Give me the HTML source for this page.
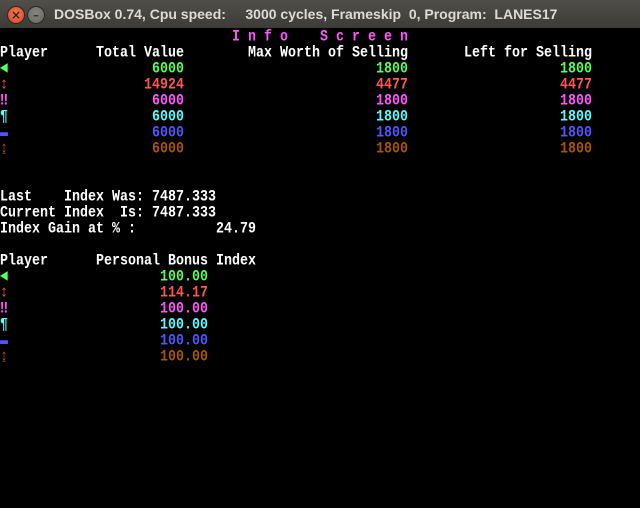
<!DOCTYPE html>
<html><head><meta charset="utf-8"><style>
html,body{margin:0;padding:0;background:#000;width:640px;height:508px;overflow:hidden;position:relative}
#tb{position:absolute;left:0;top:0;width:640px;height:28px;background:linear-gradient(#504f4a,#3c3b37);}
#tb .t{position:absolute;left:54px;top:6px;font:bold 14px "Liberation Sans","DejaVu Sans",sans-serif;color:#dfdbd2;white-space:pre}
.btn{position:absolute;top:6px;width:18px;height:18px;border-radius:50%;box-sizing:border-box;border:1px solid #2a2926}
#close{left:7px;background:radial-gradient(circle at 50% 40%,#f47a50,#d9461b)}
#min{left:27px;background:radial-gradient(circle at 50% 40%,#8a8883,#65635e)}
.btn span{position:absolute;left:0;top:0;width:16px;height:16px;text-align:center;font:bold 12px/16px "DejaVu Sans",sans-serif;color:#3a2015}
#scr{position:absolute;left:0;top:30px;width:640px;height:478px;background:#000}
.x{position:absolute;height:16px;font-family:"Liberation Mono","DejaVu Sans Mono",monospace;font-size:13.333px;line-height:16px;color:#fff;font-weight:bold;white-space:pre;transform:scaleY(1.2);transform-origin:0 50%}
.g{color:#55ff55}.r{color:#ff5555}.m{color:#ff55ff}.c{color:#55ffff}.b{color:#5555ff}.o{color:#aa5500}
</style></head><body>
<div id="tb"><div id="close" class="btn"><span>×</span></div><div id="min" class="btn"><span style="color:#3a3935">–</span></div><div class="t">DOSBox 0.74, Cpu speed:     3000 cycles, Frameskip  0, Program:  LANES17</div></div>
<div id="scr">
<div class="x m" style="top:0;left:232px">I n f o    S c r e e n</div>
<div class="x" style="top:16px;left:0">Player</div>
<div class="x" style="top:16px;left:96px">Total Value</div>
<div class="x" style="top:16px;left:248px">Max Worth of Selling</div>
<div class="x" style="top:16px;left:464px">Left for Selling</div>

<div class="x g" style="top:32px;left:0">◄</div><div class="x g" style="top:32px;left:152px">6000</div><div class="x g" style="top:32px;left:376px">1800</div><div class="x g" style="top:32px;left:560px">1800</div>
<div class="x r" style="top:48px;left:0">↕</div><div class="x r" style="top:48px;left:144px">14924</div><div class="x r" style="top:48px;left:376px">4477</div><div class="x r" style="top:48px;left:560px">4477</div>
<div class="x m" style="top:64px;left:0">‼</div><div class="x m" style="top:64px;left:152px">6000</div><div class="x m" style="top:64px;left:376px">1800</div><div class="x m" style="top:64px;left:560px">1800</div>
<div class="x c" style="top:80px;left:0">¶</div><div class="x c" style="top:80px;left:152px">6000</div><div class="x c" style="top:80px;left:376px">1800</div><div class="x c" style="top:80px;left:560px">1800</div>
<div class="x b" style="top:96px;left:0">▬</div><div class="x b" style="top:96px;left:152px">6000</div><div class="x b" style="top:96px;left:376px">1800</div><div class="x b" style="top:96px;left:560px">1800</div>
<div class="x o" style="top:112px;left:0">↨</div><div class="x o" style="top:112px;left:152px">6000</div><div class="x o" style="top:112px;left:376px">1800</div><div class="x o" style="top:112px;left:560px">1800</div>

<div class="x" style="top:160px;left:0">Last    Index Was: 7487.333</div>
<div class="x" style="top:176px;left:0">Current Index  Is: 7487.333</div>
<div class="x" style="top:192px;left:0">Index Gain at % :          24.79</div>

<div class="x" style="top:224px;left:0">Player      Personal Bonus Index</div>
<div class="x g" style="top:240px;left:0">◄</div><div class="x g" style="top:240px;left:160px">100.00</div>
<div class="x r" style="top:256px;left:0">↕</div><div class="x r" style="top:256px;left:160px">114.17</div>
<div class="x m" style="top:272px;left:0">‼</div><div class="x m" style="top:272px;left:160px">100.00</div>
<div class="x c" style="top:288px;left:0">¶</div><div class="x c" style="top:288px;left:160px">100.00</div>
<div class="x b" style="top:304px;left:0">▬</div><div class="x b" style="top:304px;left:160px">100.00</div>
<div class="x o" style="top:320px;left:0">↨</div><div class="x o" style="top:320px;left:160px">100.00</div>
</div>
</body></html>
